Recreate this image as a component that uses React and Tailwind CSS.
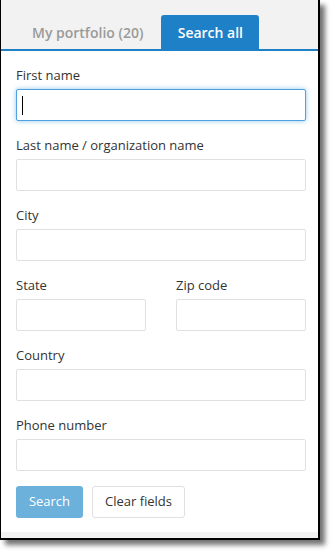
import React from "react";

function Field({ label, focused, className = "" }) {
  return (
    <div className={"flex flex-col " + className}>
      <label className="text-[13px] leading-[18px] text-[#333]">{label}</label>
      <div
        className={
          "mt-[5px] h-[32px] bg-white rounded-[2px] border flex items-center " +
          (focused
            ? "border-[#4ea2e0] shadow-[0_0_5px_rgba(102,175,233,0.7)]"
            : "border-[#e0e0e0]")
        }
      >
        {focused && <span className="ml-[5px] w-px h-[19px] bg-black" />}
      </div>
    </div>
  );
}

export default function App() {
  return (
    <div
      className="w-[335px] h-[555px] bg-white relative"
      style={{ fontFamily: '"Open Sans", "Noto Sans", sans-serif' }}
    >
      <div className="w-[320px] h-[540px] border-l border-r-2 border-b-2 border-black bg-white flex flex-col shadow-[5px_5px_5px_rgba(0,0,0,0.55)]">
        <div className="shrink-0 h-[49px] bg-[#f2f2f2] flex items-end pl-[14px] gap-px border-b-2 border-[#1e80c6] box-content">
          <div className="h-[34px] px-[17px] flex items-center text-[14px] font-semibold text-[#9a9a9a]">
            My portfolio (20)
          </div>
          <div className="h-[34px] w-[98px] flex items-center justify-center rounded-t-[3px] bg-[#1e80c6] text-[14px] font-semibold text-white">
            Search all
          </div>
        </div>
        <div className="flex-1 flex flex-col pl-[15px] pt-[15px]">
          <div className="w-[290px] flex flex-col gap-[15px]">
            <Field label="First name" focused />
            <Field label="Last name / organization name" />
            <Field label="City" />
            <div className="flex gap-[30px]">
              <Field label="State" className="w-[130px]" />
              <Field label="Zip code" className="w-[130px]" />
            </div>
            <Field label="Country" />
            <Field label="Phone number" />
          </div>
          <div className="flex gap-[9px] mt-[15px]">
            <button className="h-[32px] w-[67px] rounded-[3px] bg-[#6cb0dc] text-white text-[13px]">
              Search
            </button>
            <button className="h-[32px] w-[93px] rounded-[3px] bg-white border border-[#e0e0e0] text-[#333] text-[13px]">
              Clear fields
            </button>
          </div>
        </div>
        <div className="shrink-0 h-[6px] bg-[#f2f2f2]" />
      </div>
    </div>
  );
}
